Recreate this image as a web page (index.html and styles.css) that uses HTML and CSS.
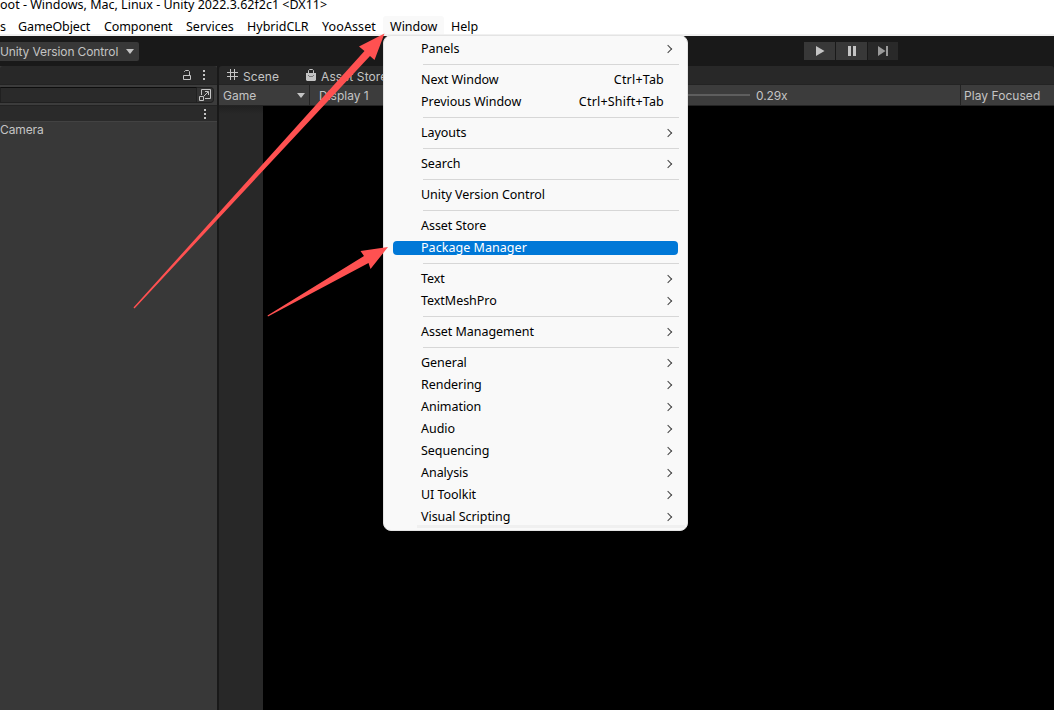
FILE: index.html
```html
<!DOCTYPE html>
<html lang="en">
<head>
    <meta charset="UTF-8">
    <meta name="viewport" content="width=device-width, initial-scale=1.0">
    <title>Unity Editor</title>
    <link rel="stylesheet" href="styles.css">
</head>
<body>
    <div class="titlebar">oot - Windows, Mac, Linux - Unity 2022.3.62f2c1 &lt;DX11&gt;</div>
    <div class="menubar">
        <span class="cut">s</span>
        <span class="w-go">GameObject</span>
        <span class="w-comp">Component</span>
        <span class="w-serv">Services</span>
        <span class="w-clr">HybridCLR</span>
        <span class="w-yoo">YooAsset</span>
        <span class="open">Window</span>
        <span>Help</span>
    </div>

    <div class="toolbar">
        <div class="version">Unity Version Control <i class="caret"></i></div>
        <div class="play-controls">
            <div class="play-btn"><svg width="31" height="18"><path d="M12 4v10l8.500-5z"/></svg></div>
            <div class="play-btn"><svg width="31" height="18"><path d="M12 4h3v10h-3zM17 4h3v10h-3z"/></svg></div>
            <div class="play-btn off"><svg width="30" height="18"><path d="M10 4v10l7.500-5zM18 4h2v10h-2z"/></svg></div>
        </div>
    </div>

    <div class="workspace">
        <div class="panel hierarchy">
            <div class="tabs">
                <svg width="217" height="19">
                    <path class="line" d="M183.500 9.500h7v4h-7zM184.500 6V5.500l1-1h3l1 1v4" />
                    <path class="dots" d="M203 4h2v2h-2zM203 8h2v2h-2zM203 12h2v2h-2z"/>
                </svg>
            </div>
            <div class="search">
                <div class="field"></div>
                <div class="pick">
                    <svg width="16" height="16">
                        <path class="line" d="M4.500 8V2.500h9v9H8M2.500 9.500h4v4h-4zM7 9l4-4M8 4.500h3.500V8"/>
                    </svg>
                </div>
            </div>
            <div class="scene-row">
                <svg width="217" height="15"><path class="dots" d="M204 3h2v2h-2zM204 7h2v2h-2zM204 11h2v2h-2z"/></svg>
            </div>
            <div class="node">Camera</div>
        </div>

        <div class="panel game">
            <div class="tabs">
                <svg class="tab-icon" width="12" height="12"><path class="line" d="M3.500 0v11M7.500 0v11M0 3.500h11M0 7.500h11"/></svg>
                <span class="tab-scene">Scene</span>
                <svg class="tab-icon" width="12" height="13">
                    <path class="dots" d="M1 4h10v7l-1 1H2l-1-1z"/>
                    <path class="line" d="M3.500 4V1.500l1-1h3l1 1V4"/>
                    <path class="smile" d="M3.500 6v1M8.500 6v1M4 7.500h4"/>
                </svg>
                <span>Asset Store</span>
            </div>
            <div class="game-bar">
                <div class="drop">Game <i class="caret"></i></div>
                <div class="display">Display 1</div>
                <div class="scale"><div class="track"></div>0.29x</div>
                <div class="focus">Play Focused</div>
            </div>
            <div class="view"><div class="screen"></div></div>
        </div>
    </div>

    <div class="menu">
        <div class="item sub">Panels</div>
        <hr>
        <div class="item">Next Window <span>Ctrl+Tab</span></div>
        <div class="item">Previous Window <span>Ctrl+Shift+Tab</span></div>
        <hr>
        <div class="item sub">Layouts</div>
        <hr>
        <div class="item sub">Search</div>
        <hr>
        <div class="item">Unity Version Control</div>
        <hr>
        <div class="item">Asset Store</div>
        <div class="item selected">Package Manager</div>
        <hr>
        <div class="item sub">Text</div>
        <div class="item sub">TextMeshPro</div>
        <hr>
        <div class="item sub">Asset Management</div>
        <hr>
        <div class="item sub">General</div>
        <div class="item sub">Rendering</div>
        <div class="item sub">Animation</div>
        <div class="item sub">Audio</div>
        <div class="item sub">Sequencing</div>
        <div class="item sub">Analysis</div>
        <div class="item sub">UI Toolkit</div>
        <div class="item sub">Visual Scripting</div>
        <div class="edge"></div>
    </div>

    <svg class="arrows" width="1054" height="710">
        <path d="M133.500 307.500L364.500 51 359 46.500 384.500 33.500 374.500 60 370 56 134.500 308.500z"/>
        <path d="M267.500 315.500L364 256 360.500 251 388 247 370.500 269 368.500 263 268 316.500z"/>
    </svg>
</body>
</html>
```

FILE: styles.css
```css
* {
    box-sizing: border-box;
}
body {
    margin: 0;
    width: 1054px;
    height: 710px;
    overflow: hidden;
    display: flex;
    flex-direction: column;
    background: #191919;
    color: #c4c4c4;
    font: 13px Inter, sans-serif;
}
svg {
    display: block;
}
.titlebar, .menubar, .menu {
    font-family: "Noto Sans", sans-serif;
    font-size: 12.5px;
    color: #000;
    white-space: nowrap;
}
.titlebar {
    height: 16px;
    line-height: 10px;
    background: #fff;
}
.menubar {
    height: 20px;
    display: flex;
    background: #fff;
    border-bottom: 2px solid #f0f0f0;
    line-height: 21px;
}
.menubar span {
    padding: 0 7px;
}
.menubar .cut {
    width: 11px;
    padding: 0;
}
.menubar .w-go {
    width: 86px;
    letter-spacing: -0.1px;
}
.w-comp {
    width: 82px;
    letter-spacing: -0.1px;
}
.w-serv { width: 61px; }
.w-clr { width: 75px; }
.w-yoo {
    width: 68px;
    letter-spacing: 0.1px;
}
.menubar .open {
    width: 61px;
    background: #f9f9f9;
    border-radius: 3px 3px 0 0;
}
.toolbar {
    height: 30px;
    display: flex;
    align-items: center;
}
.version {
    width: 139px;
    height: 19px;
    line-height: 19px;
    background: #383838;
    border-radius: 0 2px 2px 0;
    display: flex;
    align-items: center;
    justify-content: space-between;
    padding-right: 5px;
    font-size: 12px;
    letter-spacing: -0.12px;
}
.caret {
    border: 4px solid transparent;
    border-top: 5px solid #c4c4c4;
    border-bottom: 0;
}
.play-controls {
    display: flex;
    gap: 1px;
    margin-left: 665px;
}
.play-btn {
    background: #383838;
    fill: #c4c4c4;
}
.play-btn.off {
    background: #292929;
    fill: #9a9a9a;
}
.workspace {
    flex: 1;
    display: flex;
    gap: 2px;
}
.panel {
    display: flex;
    flex-direction: column;
    font-size: 12px;
}
.hierarchy {
    width: 217px;
    background: #383838;
}
.game {
    flex: 1;
}
.tabs {
    height: 19px;
    background: #282828;
    display: flex;
    align-items: center;
    border-radius: 3px 3px 0 0;
    border-bottom: 1px solid #232323;
    line-height: 19px;
}
.line {
    fill: none;
    stroke: #c4c4c4;
}
.dots {
    fill: #c4c4c4;
}
.smile {
    fill: none;
    stroke: #777;
}
.search {
    height: 21px;
    display: flex;
    padding: 2px 3px 2px 0;
    background: #3c3c3c;
    border-bottom: 1px solid #232323;
}
.field {
    flex: 1;
    background: #2a2a2a;
    border: 1px solid #202020;
    border-top-color: #0d0d0d;
}
.pick {
    width: 17px;
    background: #333;
    border: 1px solid #202020;
    border-left: 0;
    border-radius: 0 4px 4px 0;
}
.pick svg {
    margin-top: -1px;
}
.scene-row {
    height: 16px;
    background: #2a2a2a;
    border-bottom: 1px solid #424242;
}
.node {
    line-height: 16px;
    letter-spacing: -0.1px;
}
.game .tabs {
    padding-left: 8px;
}
.tab-icon {
    margin-right: 4px;
}
.tabs span {
    padding-top: 2px;
    letter-spacing: 0.1px;
}
.tab-scene {
    width: 62px;
}
.game-bar {
    height: 21px;
    display: flex;
    line-height: 21px;
    background: #3c3c3c;
    border-bottom: 1px solid #232323;
}
.drop {
    width: 91px;
    display: flex;
    align-items: center;
    justify-content: space-between;
    padding: 0 4px;
    border-right: 1px solid #232323;
}
.display {
    width: 100px;
    padding-left: 9px;
}
.scale {
    flex: 1;
    display: flex;
    align-items: center;
    letter-spacing: -0.1px;
}
.track {
    width: 340px;
    height: 2px;
    margin-right: 6px;
    background: #5e5e5e;
}
.focus {
    width: 94px;
    padding-left: 3px;
    border-left: 1px solid #232323;
    letter-spacing: 0.05px;
}
.view {
    flex: 1;
    display: flex;
    padding-left: 44px;
    background: linear-gradient(#202020, #282828 8px);
}
.screen {
    flex: 1;
    background: #000;
}
.menu {
    position: absolute;
    left: 383px;
    top: 35px;
    width: 305px;
    height: 496px;
    padding: 2px 9px 0;
    display: flex;
    flex-direction: column;
    background: #f9f9f9;
    border: 1px solid #e4e4e4;
    border-radius: 8px;
}
.menu hr {
    height: 1px;
    margin: 4px -1px 4px 30px;
    border: 0;
    background: #d7d7d7;
}
.item {
    height: 22px;
    line-height: 22px;
    padding: 0 14px 0 28px;
    display: flex;
    justify-content: space-between;
    letter-spacing: -0.04px;
}
.item span {
    letter-spacing: 0.2px;
}
.sub {
    align-items: center;
    padding-right: 7px;
}
.sub::after {
    content: "";
    width: 5px;
    height: 5px;
    margin-top: -1px;
    border: solid #444;
    border-width: 1.5px 1.5px 0 0;
    transform: rotate(45deg);
}
.item.selected {
    height: 14px;
    line-height: 13px;
    margin: 4px 0;
    border-radius: 4px;
    background: #0078d7;
    color: #fff;
    letter-spacing: 0.04px;
}
.edge {
    height: 3px;
    margin: -3px -7px 0 24px;
    background: #f0f0f0;
}
.arrows {
    position: absolute;
    left: 0;
    top: 0;
    fill: #ff5151;
}
```
